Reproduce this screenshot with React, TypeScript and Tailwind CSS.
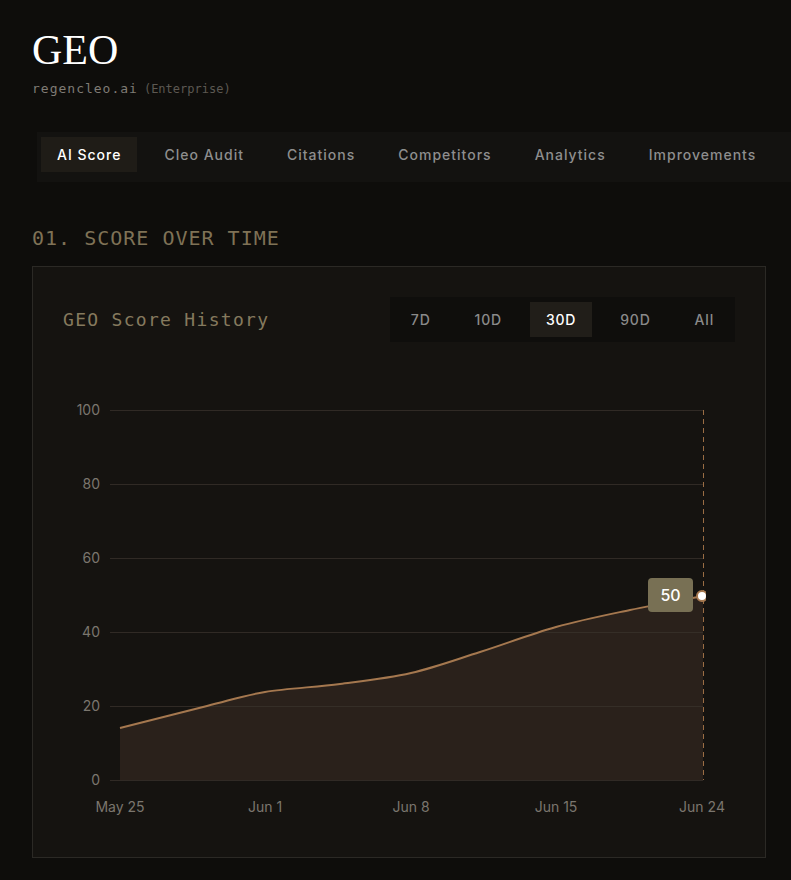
import React from "react";

const pts: [number, number][] = [
  [57, 386],
  [144, 364],
  [202, 350],
  [277, 342],
  [348, 331],
  [417, 310],
  [493, 285],
  [567, 268],
  [640, 254],
];

function smoothPath(p: [number, number][]) {
  let d = `M${p[0][0]},${p[0][1]}`;
  for (let i = 0; i < p.length - 1; i++) {
    const p0 = p[i - 1] || p[i];
    const p1 = p[i];
    const p2 = p[i + 1];
    const p3 = p[i + 2] || p2;
    const t = 6;
    const c1x = p1[0] + (p2[0] - p0[0]) / t;
    const c1y = p1[1] + (p2[1] - p0[1]) / t;
    const c2x = p2[0] - (p3[0] - p1[0]) / t;
    const c2y = p2[1] - (p3[1] - p1[1]) / t;
    d += ` C${c1x},${c1y} ${c2x},${c2y} ${p2[0]},${p2[1]}`;
  }
  return d;
}

const tabs = ["AI Score", "Cleo Audit", "Citations", "Competitors", "Analytics", "Improvements"];
const ranges = ["7D", "10D", "30D", "90D", "All"];

export default function App() {
  const line = smoothPath(pts);
  const area = `${line} L640,438 L57,438 Z`;
  const gridYs = [68, 142, 216, 290, 364, 438];
  const yLabels = ["100", "80", "60", "40", "20", "0"];
  const xLabels: [string, number][] = [
    ["May 25", 57],
    ["Jun 1", 202],
    ["Jun 8", 348],
    ["Jun 15", 493],
    ["Jun 24", 639],
  ];
  return (
    <div className="min-h-[880px] w-full overflow-hidden bg-[#0e0d0b] px-8 pt-[29px] pb-6">
      <h1
        className="text-[42px] leading-none text-white"
        style={{ fontFamily: '"Liberation Serif", serif' }}
      >
        GEO
      </h1>
      <div className="mt-[10px] flex items-baseline gap-[6px] leading-4">
        <span
          className="text-[13px] tracking-[1px] text-[#7f7b75]"
          style={{ fontFamily: '"DejaVu Sans Mono", monospace' }}
        >
          regencleo.ai
        </span>
        <span
          className="text-[12px] text-[#5c5852]"
          style={{ fontFamily: '"DejaVu Sans Mono", monospace' }}
        >
          (Enterprise)
        </span>
      </div>

      <div className="-mr-8 ml-[5px] mt-[35px] flex gap-[11px] bg-[#131210] pt-[5px] pb-[10px] pl-[4px]">
        {tabs.map((t, i) => (
          <div
            key={t}
            className={
              i === 0
                ? "flex h-[35px] items-center bg-[#1f1c17] px-4 text-sm font-medium tracking-[1px] text-white"
                : "flex h-[35px] items-center px-4 text-sm font-medium tracking-[1px] text-[#8e8e8e]"
            }
            style={{ fontFamily: "Inter, sans-serif" }}
          >
            {t}
          </div>
        ))}
      </div>

      <h2
        className="mt-[42px] text-[20px] leading-7 tracking-[1px] text-[#7f7256]"
        style={{ fontFamily: '"DejaVu Sans Mono", monospace' }}
      >
        01. SCORE OVER TIME
      </h2>

      <div className="mt-[14px] w-[734px] border border-[#2b2925] bg-[#151310] p-[30px]">
        <div className="flex items-center justify-between">
          <div
            className="text-[18px] tracking-[1.3px] text-[#857a5e]"
            style={{ fontFamily: '"DejaVu Sans Mono", monospace' }}
          >
            GEO Score History
          </div>
          <div className="flex gap-3 bg-[#0f0e0c] p-[5px]">
            {ranges.map((r) => (
              <div
                key={r}
                className={
                  r === "30D"
                    ? "flex h-[35px] items-center bg-[#211e19] px-4 text-sm font-medium tracking-[0.8px] text-white"
                    : "flex h-[35px] items-center px-4 text-sm font-medium tracking-[0.8px] text-[#8a8a8a]"
                }
                style={{ fontFamily: "Inter, sans-serif" }}
              >
                {r}
              </div>
            ))}
          </div>
        </div>

        <svg width="672" height="485" viewBox="0 0 672 485" className="block">
          <defs>
            <clipPath id="plotclip">
              <rect x="0" y="0" width="643" height="485" />
            </clipPath>
          </defs>
          <path d={area} fill="#2a211b" />
          {gridYs.map((y) => (
            <line key={y} x1="47" x2="640" y1={y + 0.5} y2={y + 0.5} stroke="#3a332c" strokeOpacity="0.75" strokeWidth="1" />
          ))}
          {yLabels.map((l, i) => (
            <text
              key={l}
              x="37"
              y={gridYs[i] + 5}
              textAnchor="end"
              fontSize="14"
              fill="#7b766e"
              fontFamily="Inter, sans-serif"
            >
              {l}
            </text>
          ))}
          {xLabels.map(([l, x]) => (
            <text
              key={l}
              x={x}
              y="470"
              textAnchor="middle"
              fontSize="14"
              fill="#7b766e"
              fontFamily="Inter, sans-serif"
            >
              {l}
            </text>
          ))}
          <path d={line} fill="none" stroke="#a5784f" strokeWidth="2" />
          <line x1="640.5" x2="640.5" y1="68" y2="438" stroke="#9a6d44" strokeWidth="1" strokeDasharray="5 4" />
          <g clipPath="url(#plotclip)">
            <circle cx="639" cy="254" r="5" fill="#ffffff" stroke="#a5784f" strokeWidth="2" />
          </g>
          <rect x="585" y="236" width="45" height="34" rx="4" fill="#787054" />
          <text
            x="607.5"
            y="259"
            textAnchor="middle"
            fontSize="16"
            fontWeight="500"
            fill="#ffffff"
            fontFamily="Inter, sans-serif"
          >
            50
          </text>
        </svg>
      </div>
    </div>
  );
}
